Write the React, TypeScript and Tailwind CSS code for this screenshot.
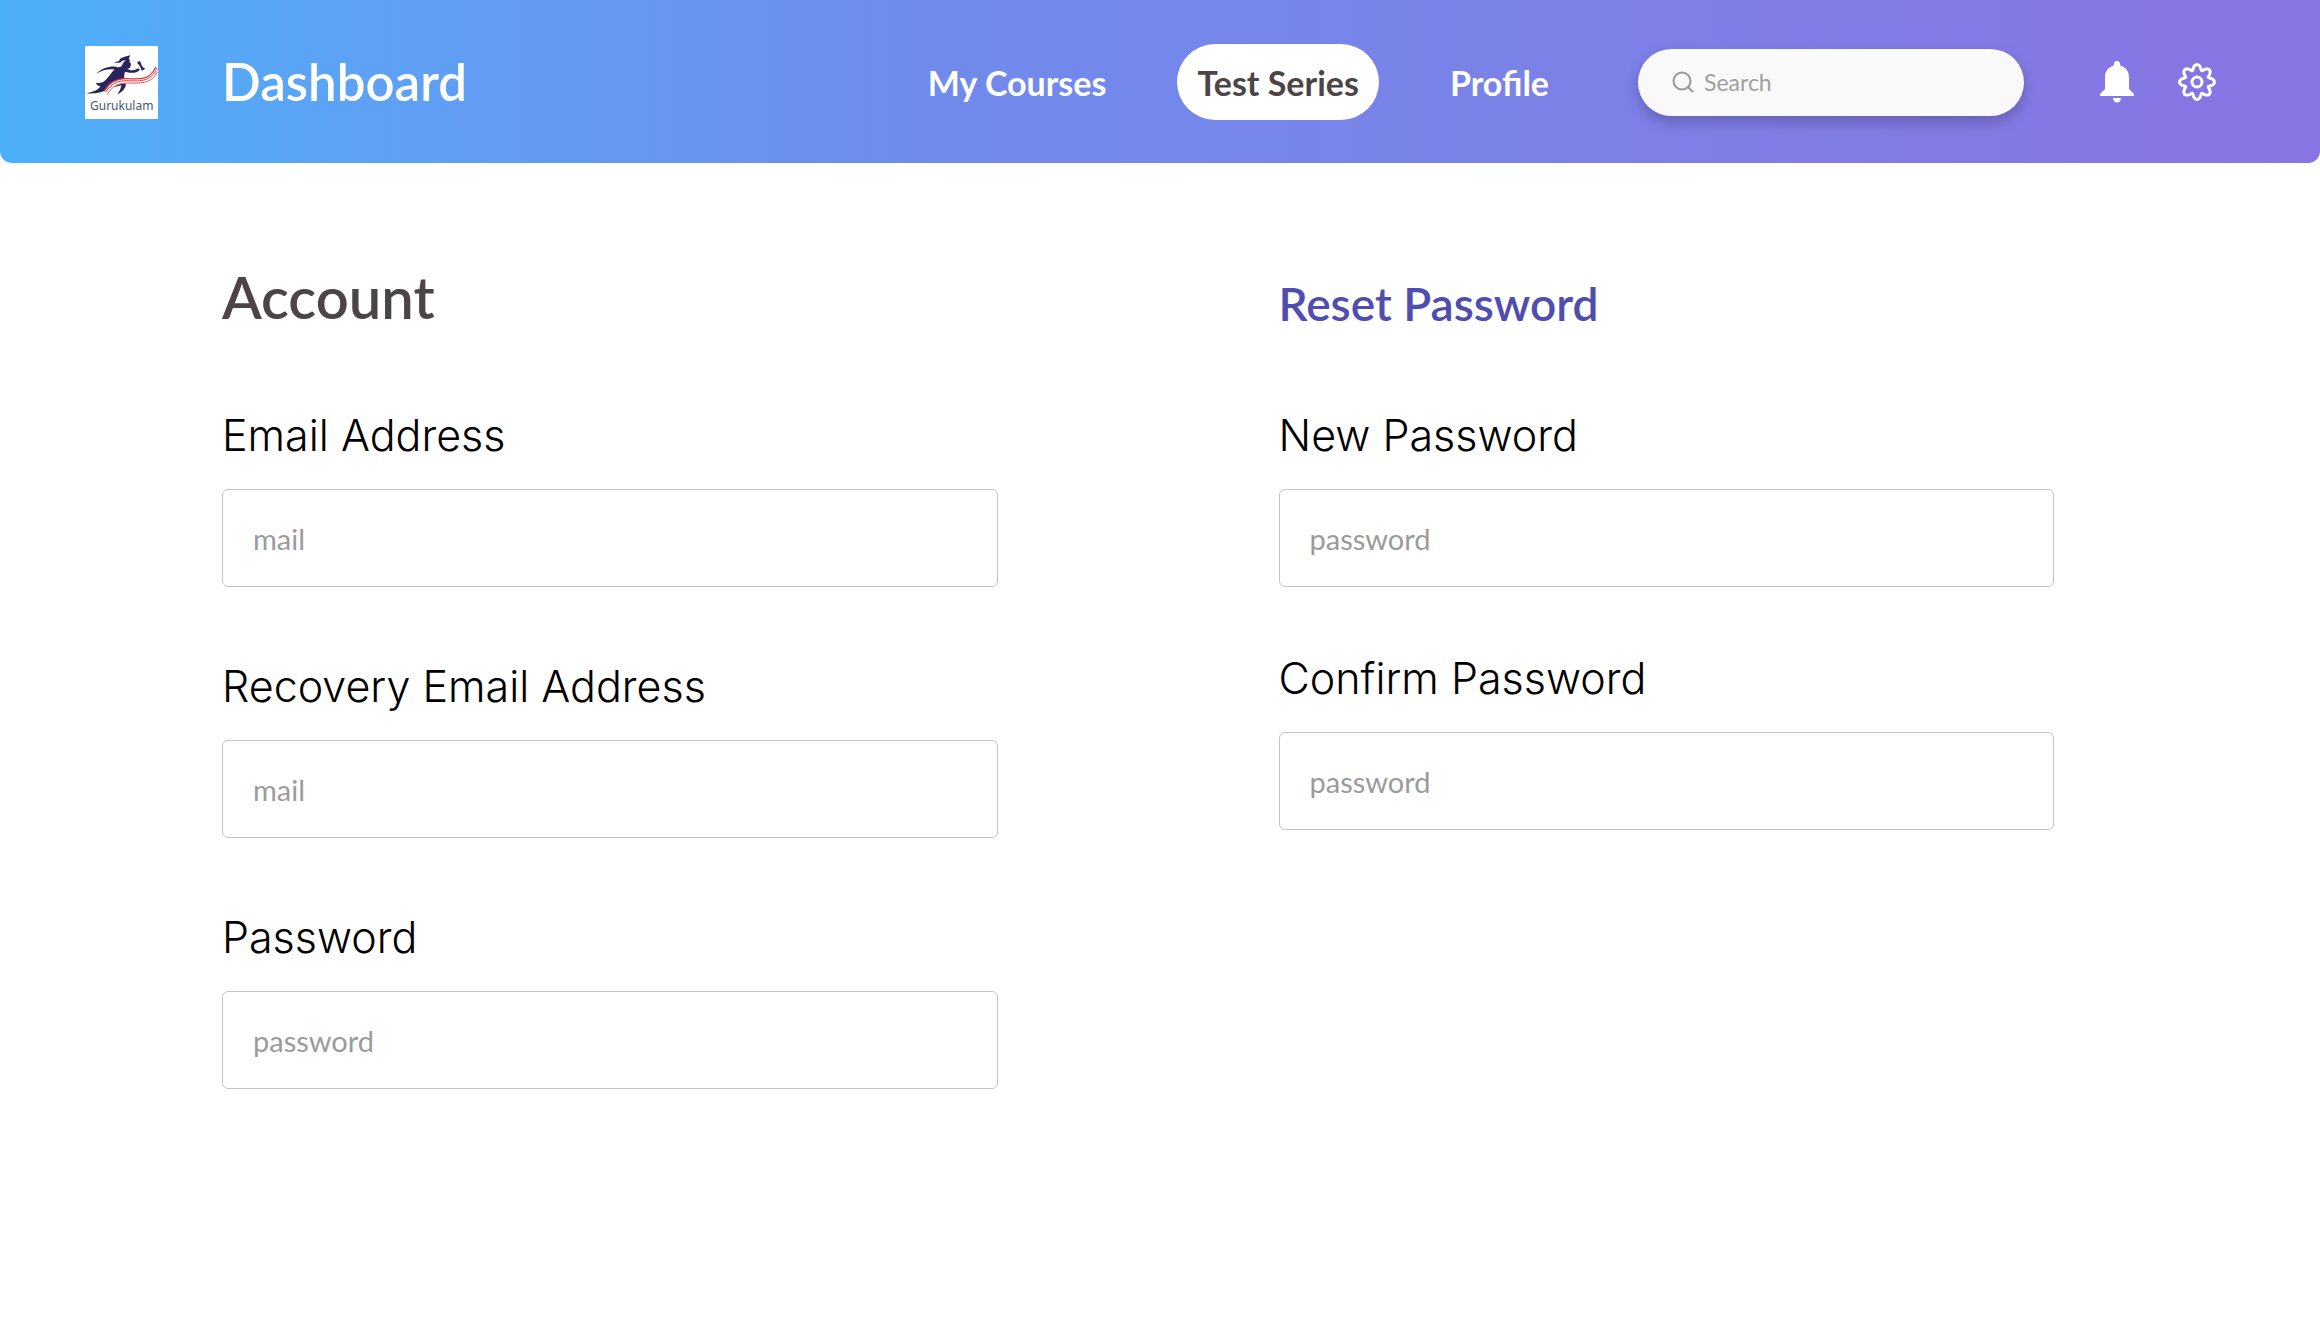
type FieldProps = { id: string; label: string; type: string; placeholder: string };

function Field({ id, label, type, placeholder }: FieldProps) {
  return (
    <div className="flex flex-col gap-7">
      <label htmlFor={id} className="font-['Inter',sans-serif] text-[43px] leading-[52px] font-light text-black">
        {label}
      </label>
      <input
        id={id}
        type={type}
        placeholder={placeholder}
        className="h-[98px] w-full rounded-md border border-[#c4c4c4] bg-white px-[30px] text-[29px] text-gray-800 outline-none placeholder:text-[#9b9b9b]"
      />
    </div>
  );
}

function Logo() {
  return (
    <svg viewBox="45 45 219 219" className="size-[73px] shrink-0" role="img" aria-label="Gurukulam">
      <rect x="45" y="45" width="219" height="219" fill="#fff" />
      <g fill="#29235f">
        <path d="M152 82 L164 77 L180 73 L179 79 L176 81 L180 90 L172 91 L162 88 L156 90 L150 95 L138 95 L132 94 L146 91 Z" />
        <ellipse cx="171" cy="101" rx="11.500" ry="12" />
        <path d="M161 88 L160 98 L164 110 L150 111 L157 101 Z" />
        <path d="M144 108 C124 103 97 110 79 128 C98 117 116 113 135 116 Z" />
        <path d="M135 114 C144 106 157 107 169 111 L177 116 C187 119 196 118 204 112 L210 116 C202 124 190 127 178 125 L165 122 C161 135 163 143 163 152 L168 161 C165 173 158 182 142 190 C149 181 152 174 154 163 L118 172 C98 186 73 189 50 187 C70 183 84 177 92 166 C88 166 81 163 77 155 C91 158 98 155 106 148 C117 138 123 124 135 114 Z" />
        <path d="M201 96 C203 92 208 90 211 91 C212 97 215 104 220 110 L225 111 C224 116 218 119 214 118 C213 110 209 104 204 98 Z" />
      </g>
      <path fill="none" stroke="#fff" strokeWidth="13" d="M111 184 C125 158 143 150 168 150 C203 149 237 154 257 120" />
      <g fill="none" stroke="#e0323c" strokeLinecap="round">
        <path strokeWidth="3.500" d="M104 176 C119 154 140 143 165 143 C200 143 237 153 257 109" />
        <path strokeWidth="3" d="M108 182 C123 157 144 149 169 149 C205 150 241 156 261 112" />
        <path strokeWidth="2.500" d="M112 190 C127 164 147 156 172 156 C207 157 246 159 261 124" />
      </g>
      <text x="60" y="236" fontSize="36" fill="#3f5b70" fontFamily="'Noto Sans', sans-serif">
        Gurukulam
      </text>
    </svg>
  );
}

function BellIcon() {
  return (
    <svg viewBox="0 0 34 42" className="h-[42px] w-[34px]" fill="currentColor" aria-hidden="true">
      <path d="M17 0c-1.900 0-3.200 1.400-3.200 3.200v1.300C8.400 6 5 10.500 5 16v12L.8 32.200C.3 32.700 0 33.300 0 34v1h34v-1c0-.7-.3-1.300-.8-1.800L29 28V16c0-5.500-3.400-10-8.800-11.500V3.200C20.200 1.400 18.900 0 17 0z" />
      <path d="M13 37h8c0 2.500-1.700 4.500-4 4.500s-4-2-4-4.500z" />
    </svg>
  );
}

// Eight soft teeth: the outline's radius swings between 12.2 and 17.4 around the centre.
const gearOutline =
  Array.from({ length: 160 }, (_, i) => {
    const a = (i / 160) * Math.PI * 2;
    const r = 14.8 + 2.6 * Math.cos(8 * a);
    const twist = 0.04 * Math.sin(8 * a);
    return `${i === 0 ? 'M' : 'L'}${(20 + r * Math.sin(a + twist)).toFixed(2)} ${(20 - r * Math.cos(a + twist)).toFixed(2)}`;
  }).join('') + 'Z';

function GearIcon() {
  return (
    <svg viewBox="0 0 40 40" className="size-10" fill="none" stroke="currentColor" strokeWidth="3" strokeLinejoin="round" aria-hidden="true">
      <circle cx="20" cy="20" r="5" />
      <path d={gearOutline} />
    </svg>
  );
}

function SearchIcon() {
  return (
    <svg viewBox="0 0 22 22" className="size-[22px] shrink-0" fill="none" stroke="#999" strokeWidth="2" strokeLinecap="round" aria-hidden="true">
      <circle cx="10" cy="10" r="8.500" />
      <path d="M16.500 16.500L20.500 20.500" />
    </svg>
  );
}

const navLink = 'flex h-[76px] items-center rounded-full px-5 text-[34px] font-bold whitespace-nowrap';

export default function App() {
  return (
    <div className="min-h-screen bg-white font-['Lato',sans-serif]">
      <header className="flex h-[163px] items-center rounded-b-xl bg-linear-to-r from-[#4bb0fa] via-[#6f8bec] via-40% to-[#8874e2] pt-px pr-[103px] pl-[85px] text-white">
        <Logo />
        <h1 className="ml-16 text-[51px] leading-[60px] font-semibold">Dashboard</h1>
        <nav className="ml-auto flex items-center gap-[51px]">
          <a href="#courses" className={navLink}>My Courses</a>
          <a href="#tests" aria-current="page" className={`${navLink} bg-white text-[#4d4545]`}>Test Series</a>
          <a href="#profile" className={navLink}>Profile</a>
        </nav>
        <label className="ml-[69px] flex h-[67px] w-[386px] items-center gap-[10px] rounded-full bg-[#f9f9f9] pr-8 pl-[34px] shadow-[0_6px_14px_rgba(0,0,0,0.22)]">
          <SearchIcon />
          <input
            type="search"
            aria-label="Search"
            placeholder="Search"
            className="w-full min-w-0 bg-transparent text-[23px] text-gray-800 outline-none placeholder:text-[#a0a0a0]"
          />
        </label>
        <button type="button" aria-label="Notifications" className="ml-[76px]">
          <BellIcon />
        </button>
        <button type="button" aria-label="Settings" className="ml-[43px]">
          <GearIcon />
        </button>
      </header>

      <main className="grid grid-cols-2 gap-[281px] pt-[99px] pr-[266px] pb-16 pl-[222px]">
        <section>
          <h2 className="text-[58px] leading-[70px] font-semibold text-[#4d4545]">Account</h2>
          <form className="mt-[77px] flex flex-col gap-[73px]">
            <Field id="email" label="Email Address" type="email" placeholder="mail" />
            <Field id="recovery" label="Recovery Email Address" type="email" placeholder="mail" />
            <Field id="password" label="Password" type="password" placeholder="password" />
          </form>
        </section>
        <section>
          <h2 className="text-[46px] leading-[84px] font-semibold text-[#4f4db0]">Reset Password</h2>
          <form className="mt-[63px] flex flex-col gap-[65px]">
            <Field id="new-password" label="New Password" type="password" placeholder="password" />
            <Field id="confirm-password" label="Confirm Password" type="password" placeholder="password" />
          </form>
        </section>
      </main>
    </div>
  );
}
